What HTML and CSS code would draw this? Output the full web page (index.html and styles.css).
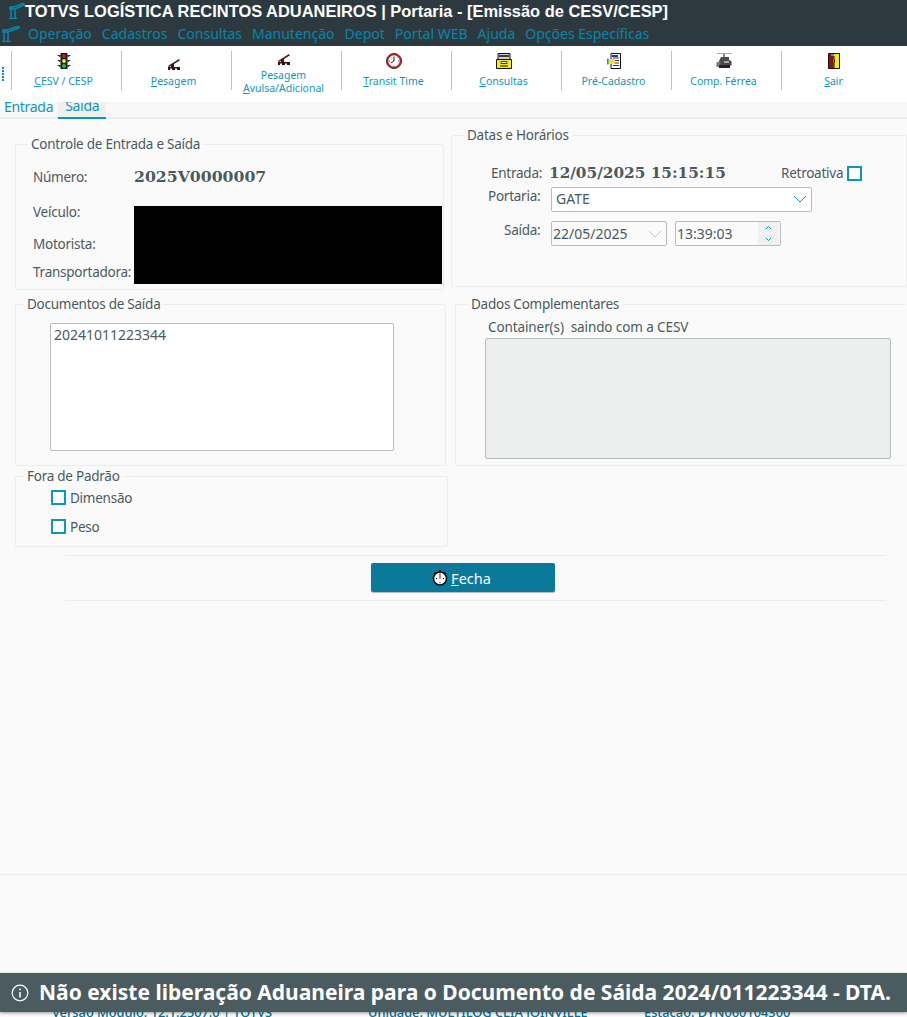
FILE: index.html
```html
<!DOCTYPE html>
<html lang="pt-BR">
<head>
<meta charset="utf-8">
<title>Portaria</title>
<link rel="stylesheet" href="styles.css">
</head>
<body>
<header class="appbar">
  <div class="titlebar">
    <svg class="crane crane-top" viewBox="0 0 18 16"><path d="M2 15.500h8M4 16V4M8 16V5M3 4h4l10-4v2L8 6H3z" fill="none" stroke="#0b87ae" stroke-width="1.500"/></svg>
    <h1 class="apptitle">TOTVS LOGÍSTICA RECINTOS ADUANEIROS | Portaria - [Emissão de CESV/CESP]</h1>
  </div>
  <nav class="menubar">
    <svg class="crane" viewBox="0 0 18 16"><path d="M0 15.500h9M2 16V4M6 16V5M1 4h4l12-4v2L6 6H1z" fill="none" stroke="#0b87ae" stroke-width="1.500"/></svg>
    <span>Operação</span><span>Cadastros</span><span>Consultas</span><span>Manutenção</span><span>Depot</span><span>Portal WEB</span><span>Ajuda</span><span>Opções Específicas</span>
  </nav>
</header>

<div class="toolbar">
  <div class="grip"></div>
  <div class="tool">
    <svg class="ico" viewBox="0 0 16 16"><path d="M4.500 0h7v16h-7z" fill="#15202a"/><path d="M1 2h3.500v2.500zM15 2h-3.500v2.500zM1 7h3.500v2.500zM15 7h-3.500v2.500zM1 12h3.500v2.500zM15 12h-3.500v2.500z" fill="#222c34"/><circle cx="8" cy="3" r="1.900" fill="#e01010"/><circle cx="8" cy="8" r="1.900" fill="#f4e820"/><circle cx="8" cy="13" r="1.900" fill="#20d020"/></svg>
    <span class="tlabel"><u>C</u>ESV / CESP</span>
  </div>
  <div class="tool">
    <svg class="ico ico-low" viewBox="0 0 12 11"><path d="M0 7L11 0l.8 1.500L1 8z" fill="#4a1414"/><path d="M0 8h12v3H0z" fill="#3e0c0c"/><path d="M2 9.500h2V11H2zM7 9.500h2V11H7z" fill="#fff"/><path d="M3 5h3v3H3z" fill="#222"/></svg>
    <span class="tlabel tlabel-low"><u>P</u>esagem</span>
  </div>
  <div class="tool tool-two">
    <svg class="ico ico-two" viewBox="0 0 12 11"><path d="M0 7L11 0l.8 1.500L1 8z" fill="#4a1414"/><path d="M0 8h12v3H0z" fill="#3e0c0c"/><path d="M2 9.500h2V11H2zM7 9.500h2V11H7z" fill="#fff"/><path d="M3 5h3v3H3z" fill="#222"/></svg>
    <span class="tlabel tlabel-two">Pesagem<br><u>A</u>vulsa/Adicional</span>
  </div>
  <div class="tool">
    <svg class="ico" viewBox="0 0 16 16"><circle cx="8" cy="8" r="6.500" fill="#fff" stroke="#d01818" stroke-width="1.600"/><circle cx="8" cy="8" r="7.600" fill="none" stroke="#111" stroke-width=".8"/><path d="M8 3.500V8l-3.200 2" fill="none" stroke="#222" stroke-width="1"/><path d="M8 12.500v1M3 8h1M12 8h1M11 4.500l.7-.7" stroke="#2030b0" stroke-width=".9"/></svg>
    <span class="tlabel"><u>T</u>ransit Time</span>
  </div>
  <div class="tool">
    <svg class="ico" viewBox="0 0 16 16"><path d="M2 .5h12v6H2z" fill="#ccc" stroke="#111"/><path d="M3 3h10" stroke="#111" stroke-width="1.500"/><path d="M.5 6.500h15v9H.5z" fill="#f6ee00" stroke="#111"/><path d="M5 8.500h6v2H5z" fill="#fff" stroke="#111" stroke-width=".8"/><path d="M4 13h8" stroke="#111"/></svg>
    <span class="tlabel"><u>C</u>onsultas</span>
  </div>
  <div class="tool">
    <svg class="ico" viewBox="0 0 16 16"><path d="M5 .5h9.500v15H5z" fill="#fff" stroke="#111"/><path d="M7 5h6M7 7.500h6M7 10h6M7 12.500h6" stroke="#223" stroke-width=".9"/><path d="M6 2h6v2H6z" fill="#2030c0"/><path d="M1.500 6h7.500v5H1.500z" fill="#f2e040"/><path d="M1 5.500h1.500v6H1z" fill="#0f96bd"/></svg>
    <span class="tlabel">Pré-Cadastro</span>
  </div>
  <div class="tool">
    <svg class="ico" viewBox="0 0 16 16"><path d="M1 .5h15" stroke="#aaa"/><path d="M7 1h2v3H7z" fill="#888"/><path d="M5 4h8v3l2.500 1v4.500H3V8z" fill="#4c4c4c"/><path d="M.5 9h4v5h-4z" fill="#777"/><path d="M3 12h11v3H3z" fill="#222"/><path d="M8 8h5v2H8z" fill="#aaa"/></svg>
    <span class="tlabel">Comp. Férrea</span>
  </div>
  <div class="tool">
    <svg class="ico" viewBox="0 0 16 16"><path d="M2.500.5h11v15h-11z" fill="#f6ee00" stroke="#111"/><path d="M3 1h4.500v14H3z" fill="#8c1414"/><path d="M5 1h2.500v2H5z" fill="#20a8c8"/><path d="M8 3v4l1 1-1 1v6" fill="none" stroke="#111"/></svg>
    <span class="tlabel"><u>S</u>air</span>
  </div>
</div>

<div class="tabs">
  <span class="tab">Entrada</span>
  <span class="tab tab-active">Saída</span>
</div>

<main class="content">
  <div class="columns">
    <div class="col-left">
      <fieldset class="group g-control">
        <legend class="leg-control">Controle de Entrada e Saída</legend>
        <div class="ctl-row ctl-num"><span class="ctl-label">Número:</span><strong class="num-value">2025V0000007</strong></div>
        <div class="ctl-row ctl-vei"><span class="ctl-label">Veículo:</span></div>
        <div class="ctl-row ctl-mot"><span class="ctl-label">Motorista:</span></div>
        <div class="ctl-row ctl-tra"><span class="ctl-label">Transportadora:</span></div>
        <div class="redact"></div>
      </fieldset>
      <fieldset class="group g-docs">
        <legend class="leg-docs">Documentos de Saída</legend>
        <div class="textbox">20241011223344</div>
      </fieldset>
      <fieldset class="group g-fora">
        <legend class="leg-fora">Fora de Padrão</legend>
        <label class="check"><span class="box"></span><span class="ck-text">Dimensão</span></label>
        <label class="check check-2"><span class="box"></span><span class="ck-text">Peso</span></label>
      </fieldset>
    </div>
    <div class="col-right">
      <fieldset class="group g-datas">
        <legend class="leg-datas">Datas e Horários</legend>
        <div class="dt-entrada">
          <span class="lb-entrada">Entrada:</span>
          <strong class="dt-value">12/05/2025 15:15:15</strong>
          <span class="retro">Retroativa</span><span class="box"></span>
        </div>
        <div class="dt-portaria">
          <span class="lb-portaria">Portaria:</span>
          <div class="select"><span>GATE</span><svg class="chev" viewBox="0 0 14 8"><path d="M1 1l6 6 6-6" fill="none" stroke="#0f8db5" stroke-width="1"/></svg></div>
        </div>
        <div class="dt-saida">
          <span class="lb-saida">Saída:</span>
          <div class="datebox"><span>22/05/2025</span><svg class="chev" viewBox="0 0 14 8"><path d="M1 1l6 6 6-6" fill="none" stroke="#bfc4c4" stroke-width="1"/></svg></div>
          <div class="timebox"><span>13:39:03</span>
            <div class="spin">
              <svg class="spin-btn" viewBox="0 0 21 11"><path d="M8 7l2.500-2.500L13 7" fill="none" stroke="#0f8db5"/></svg>
              <svg class="spin-btn" viewBox="0 0 21 11"><path d="M8 4l2.500 2.500L13 4" fill="none" stroke="#0f8db5"/></svg>
            </div>
          </div>
        </div>
      </fieldset>
      <fieldset class="group g-dados">
        <legend class="leg-dados">Dados Complementares</legend>
        <div class="cont-label">Container(s)&nbsp; saindo com a CESV</div>
        <div class="cont-box"></div>
      </fieldset>
    </div>
  </div>

  <div class="actions">
    <button class="btn" type="button">
      <svg class="btn-ico" viewBox="0 0 16 16"><circle cx="8" cy="8.500" r="6.500" fill="#fff" stroke="#111" stroke-width="1.600"/><path d="M7 0h2v2H7zM1.500 3l2-1 1 1-2 1zM14.500 3l-2-1-1 1 2 1z" fill="#111"/><path d="M8 3.500v5" stroke="#c01818" stroke-width="1.200"/><path d="M4 8.500h1M11 8.500h1M8 12v1" stroke="#111"/></svg>
      <span><u>F</u>echa</span>
    </button>
  </div>
</main>

<div class="rule-bottom"></div>

<div class="statusline">
  <span class="st-1">Versão Módulo: 12.1.2507.0 | TOTVS</span>
  <span class="st-2">Unidade: MULTILOG CLIA JOINVILLE</span>
  <span class="st-3">Estação: DYN060104300</span>
</div>
<div class="toast">
  <svg class="toast-ico" viewBox="0 0 18 18"><circle cx="9" cy="9" r="7.800" fill="none" stroke="#fff" stroke-width="1.200"/><path d="M9 8v5.500" stroke="#fff" stroke-width="1.500"/><path d="M9 4.500v1.800" stroke="#fff" stroke-width="1.500"/></svg>
  <span>Não existe liberação Aduaneira para o Documento de Sáida 2024/011223344 - DTA.</span>
</div>
</body>
</html>
```
FILE: styles.css
```css
* { box-sizing: border-box; }
html, body { height: 100%; }
body {
  margin: 0;
  height: 1017px;
  overflow: hidden;
  position: relative;
  background: #fafafa;
  font-family: "Noto Sans", "Open Sans", sans-serif;
  font-size: 13.5px;
  letter-spacing: -.25px;
  color: #4a5a60;
}
.appbar { height: 46px; background: #2c3a3f; }
.titlebar { height: 22px; display: flex; align-items: center; padding-left: 7px; }
.crane { width: 18px; height: 16px; flex: none; }
.apptitle { margin: 0; font: bold 16.450px/22px "Liberation Sans", Arial, sans-serif; letter-spacing: 0; color: #fff; white-space: nowrap; }
.menubar { height: 24px; display: flex; align-items: center; padding-left: 2px; gap: 10px; color: #0b84aa; font-size: 14px; letter-spacing: 0; line-height: 24px; white-space: nowrap; }
.menubar .crane { margin-right: -2px; }
.toolbar { height: 56px; background: #fff; display: flex; align-items: stretch; padding: 5px 0 0 11px; position: relative; }
.grip { position: absolute; left: 2px; top: 21px; width: 2px; height: 14px; background: repeating-linear-gradient(#0f8db5 0 2px, transparent 2px 3px); }
.tool { width: 110px; height: 39px; padding-right: 6px; border-left: 1px solid #bcc2c2; display: flex; flex-direction: column; align-items: center; color: #0f96bd; font-size: 10.500px; letter-spacing: 0; line-height: 13px; }
.ico { width: 16px; height: 16px; margin-top: 2px; flex: none; }
.ico-low { width: 12px; height: 11px; margin-top: 8px; }
.ico-two { width: 12px; height: 11px; margin-top: 3px; }
.tlabel { margin-top: 6px; text-align: center; white-space: nowrap; }
.tlabel-low { margin-top: 5px; }
.tlabel-two { margin-top: 4px; }
.tabs { height: 17px; display: flex; background: #f8f8f8; border-bottom: 2px solid #eceeee; padding-left: 4px; font-size: 14px; letter-spacing: -.3px; color: #0f96bd; line-height: 10px; }
.tab { height: 17px; margin-right: 5px; }
.tab-active { width: 48px; text-align: center; background: #eff0f0; border-bottom: 2px solid #0f96bd; line-height: 7px; }
.content { height: 488px; }
.columns { display: flex; height: 436px; }
.col-left { width: 451px; padding-left: 15px; flex: none; }
.col-right { flex: 1; min-width: 0; }
.group { margin: 0; padding: 0; border: 1px solid #eceeee; border-radius: 2px; position: relative; min-width: 0; }
legend { line-height: 16px; padding: 0 3px; color: #4a5a60; white-space: nowrap; }
.g-control { width: 429px; height: 154px; margin-top: 17px; }
.leg-control { margin-left: 12px; }
.ctl-row { position: absolute; left: 17px; }
.ctl-label { line-height: 18px; }
.ctl-num { top: 16px; }
.ctl-vei { top: 51px; }
.ctl-mot { top: 83px; }
.ctl-tra { top: 111px; }
.num-value { position: absolute; left: 101px; top: -3px; font: bold 15.700px/24px "DejaVu Serif", serif; letter-spacing: 0; color: #4a5a60; white-space: nowrap; }
.redact { position: absolute; left: 118px; top: 54px; width: 308px; height: 78px; background: #000; }
.g-docs { width: 431px; height: 170px; margin-top: 6px; }
.leg-docs { margin-left: 8px; }
.textbox { margin: 11px 0 0 34px; width: 344px; height: 128px; background: #fff; border: 1px solid #b7bdbd; border-radius: 2px; padding: 3px; line-height: 16px; font-size: 14px; letter-spacing: 0; }
.g-fora { width: 433px; height: 79px; margin-top: 2px; }
.leg-fora { margin-left: 8px; }
.check { display: flex; align-items: center; gap: 4px; margin: 4px 0 0 35px; height: 18px; line-height: 18px; }
.check-2 { margin-top: 11px; }
.ck-text { padding-top: 2px; }
.box { width: 15px; height: 15px; border: 2px solid #0f96bd; background: #fff; flex: none; display: block; }
.g-datas { height: 160px; margin-top: 8px; }
.leg-datas { margin-left: 12px; }
.dt-entrada { position: absolute; left: 0; right: 0; top: 21px; display: flex; align-items: center; height: 18px; padding-left: 39px; }
.lb-entrada { width: 58px; flex: none; }
.dt-value { font: bold 15.300px/18px "DejaVu Serif", serif; letter-spacing: 0; color: #4a5a60; white-space: nowrap; width: 232px; flex: none; }
.retro { margin-right: 4px; }
.dt-portaria { position: absolute; left: 0; top: 44px; display: flex; padding-left: 36px; }
.lb-portaria { line-height: 18px; width: 63px; flex: none; }
.select { width: 261px; height: 25px; background: #fff; border: 1px solid #b7bdbd; border-radius: 2px; display: flex; align-items: center; justify-content: space-between; padding: 0 4px 2px; font-size: 14px; letter-spacing: 0; }
.dt-saida { position: absolute; left: 0; top: 78px; display: flex; padding-left: 52px; }
.lb-saida { line-height: 18px; width: 47px; flex: none; }
.datebox { width: 116px; height: 25px; border: 1px solid #b7bdbd; border-radius: 2px; display: flex; align-items: center; justify-content: space-between; padding: 0 4px 0 1px; margin-right: 8px; font-size: 14px; letter-spacing: 0; }
.chev { width: 14px; height: 8px; flex: none; }
.timebox { width: 106px; height: 25px; border: 1px solid #b7bdbd; border-radius: 2px; display: flex; align-items: center; justify-content: space-between; padding-left: 1px; font-size: 14px; letter-spacing: 0; }
.spin { width: 21px; display: flex; flex-direction: column; gap: 1px; margin-right: 1px; }
.spin-btn { width: 21px; height: 11px; background: #eff0f0; display: block; }
.g-dados { height: 170px; margin: 9px 0 0 4px; border-right: 0; }
.leg-dados { margin-left: 12px; }
.cont-label { margin: 6px 0 0 32px; line-height: 18px; letter-spacing: -.1px; }
.cont-box { margin: 2px 0 0 29px; width: 406px; height: 121px; background: #eceeee; border: 1px solid #b7bdbd; border-radius: 2px; }
.actions { margin-left: 65px; width: 821px; height: 46px; border-top: 1px solid #eceeee; border-bottom: 1px solid #eceeee; display: flex; padding: 7px 0 0 306px; }
.btn { width: 184px; height: 29px; background: #0b7a9a; border: 0; border-radius: 2px; box-shadow: 0 1px 1px #b0b8b8; color: #fff; display: flex; align-items: center; justify-content: center; gap: 3px; font: 14.500px/18px "Noto Sans", sans-serif; padding: 0 3px 0 0; }
.btn-ico { width: 16px; height: 16px; }
.rule-bottom { position: absolute; left: 0; right: 0; top: 874px; height: 1px; background: #eceeee; }
.statusline { position: absolute; left: 0; right: 0; top: 1005px; height: 12px; color: #0b6f8e; font-size: 12.800px; letter-spacing: 0; line-height: 12px; font-weight: 500; }
.statusline span { position: absolute; top: 1px; white-space: nowrap; }
.st-1 { left: 52px; }
.statusline .st-2 { left: 368px; }
.statusline .st-3 { left: 644px; }
.toast { position: absolute; left: 0; right: 0; top: 973px; height: 39px; background: #4b5c60; color: #fff; display: flex; align-items: center; padding-left: 11px; gap: 10px; box-shadow: 0 1px 3px rgba(0,0,0,.4); font: bold 21px/39px "Noto Sans", sans-serif; letter-spacing: 0; white-space: nowrap; }
.toast-ico { width: 18px; height: 18px; flex: none; }
```
